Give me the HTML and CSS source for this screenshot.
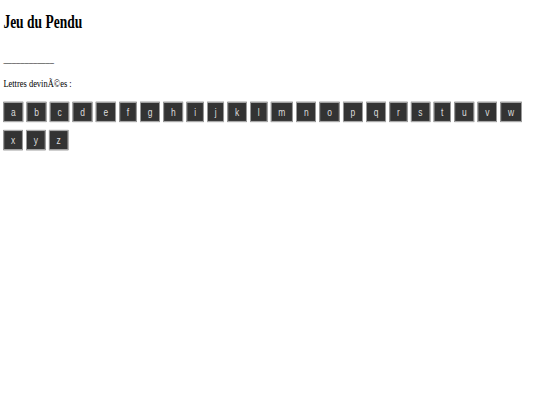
FILE: index.html
```html
<!DOCTYPE html>
<html lang="fr">
<head>
<meta charset="utf-8">
<title>Jeu du Pendu</title>
<link rel="stylesheet" href="styles.css">
</head>
<body>
<div class="frame">
<div class="page">
  <h1 class="title">Jeu du Pendu</h1>
  <p class="word">____________</p>
  <p class="guessed">Lettres devinÃ©es :</p>
  <div class="letters">
    <button class="key">a</button>
    <button class="key">b</button>
    <button class="key">c</button>
    <button class="key">d</button>
    <button class="key">e</button>
    <button class="key">f</button>
    <button class="key">g</button>
    <button class="key">h</button>
    <button class="key">i</button>
    <button class="key">j</button>
    <button class="key">k</button>
    <button class="key">l</button>
    <button class="key">m</button>
    <button class="key">n</button>
    <button class="key">o</button>
    <button class="key">p</button>
    <button class="key">q</button>
    <button class="key">r</button>
    <button class="key">s</button>
    <button class="key">t</button>
    <button class="key">u</button>
    <button class="key">v</button>
    <button class="key">w</button>
    <button class="key">x</button>
    <button class="key">y</button>
    <button class="key">z</button>
  </div>
</div>
</div>
</body>
</html>
```

FILE: styles.css
```css
html, body {
  margin: 0;
  padding: 0;
  background: #ffffff;
  overflow: hidden;
}

.frame {
  width: 540px;
  height: 405px;
  overflow: hidden;
}

.page {
  display: flow-root;
  box-sizing: border-box;
  width: 1280px;
  height: 720px;
  padding: 0 8px;
  transform: scale(0.421875, 0.5625);
  transform-origin: 0 0;
  font-family: "Liberation Serif", "Times New Roman", serif;
  color: #000;
}

.title {
  margin: 20px 0 0;
  font-size: 32px;
  line-height: 37px;
  font-weight: bold;
}

.word {
  margin: 35px 0 0;
  font-size: 20px;
  line-height: 23px;
  color: #222;
}

.guessed {
  margin: 22px 0 0;
  font-size: 20px;
  line-height: 23px;
}

.letters {
  display: flex;
  flex-wrap: wrap;
  column-gap: 8px;
  row-gap: 14px;
  margin-top: 21px;
}

.key {
  box-sizing: border-box;
  height: 36px;
  margin: 0;
  padding: 0 16px;
  border: 2px solid #a8a8a8;
  border-radius: 0;
  background: #333333;
  color: #dddddd;
  font-family: "Liberation Sans", Arial, sans-serif;
  font-size: 20px;
  line-height: 23px;
}
```
